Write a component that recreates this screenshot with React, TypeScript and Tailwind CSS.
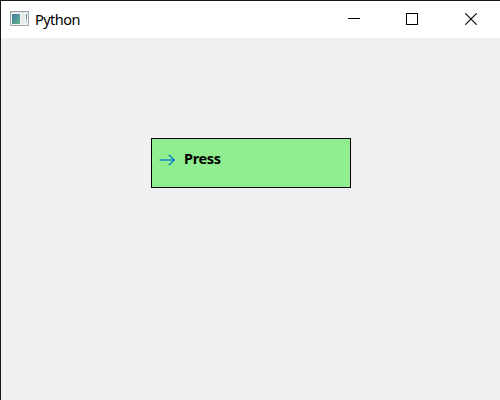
function AppIcon() {
  return (
    <svg width="19" height="15" viewBox="0 0 19 15" className="shrink-0">
      <defs>
        <linearGradient id="pane" x1="0" y1="0" x2="1" y2="1">
          <stop offset="0" stopColor="#4a7ba6" />
          <stop offset="1" stopColor="#5db585" />
        </linearGradient>
      </defs>
      <rect x="0.5" y="0.5" width="18" height="14" fill="#f4f5f6" stroke="#9da3a8" />
      <rect x="1" y="1" width="17" height="1" fill="#dfe3e6" />
      <rect x="2" y="3" width="8" height="10" fill="url(#pane)" />
      <rect x="11" y="3" width="4" height="10" fill="#e6e9ea" />
      <rect x="16" y="3" width="1" height="5" fill="#5b93a5" />
      <rect x="16" y="8" width="1" height="4" fill="#b5d8c5" />
    </svg>
  );
}

function TitleBar() {
  return (
    <header className="flex h-[37px] items-start bg-white">
      <div className="flex grow pl-[9px] pt-[10px]">
        <AppIcon />
        <span className="-mt-[2px] ml-[6px] text-[14.5px] leading-[20px] tracking-[-0.55px] text-black">Python</span>
      </div>
      <div className="flex h-[37px] shrink-0">
        <button aria-label="Minimize" className="w-[58px] pl-[22px]">
          <svg width="12" height="12" className="mb-[1px]" shapeRendering="crispEdges">
            <path d="M0 5.5H12" stroke="#000" />
          </svg>
        </button>
        <button aria-label="Maximize" className="w-[58px] pl-[22px]">
          <svg width="12" height="12" className="mb-[1px]" shapeRendering="crispEdges">
            <rect x="0.5" y="0.5" width="11" height="11" fill="none" stroke="#000" />
          </svg>
        </button>
        <button aria-label="Close" className="w-[58px] pl-[23px]">
          <svg width="12" height="12" className="mb-[1px]">
            <path d="M0.3 0.3L11.7 11.7M11.7 0.3L0.3 11.7" stroke="#000" strokeWidth="1.1" />
          </svg>
        </button>
      </div>
    </header>
  );
}

export default function App() {
  return (
    <div className="flex h-[400px] w-[500px] flex-col overflow-hidden border-l border-t border-[#171717] bg-[#f0f0f0] font-['Noto_Sans',sans-serif]">
      <TitleBar />
      <main className="grow pl-[150px] pt-[100px]">
        <button className="flex h-[50px] w-[200px] items-start border border-black bg-[#90ee90] pl-[7px] pt-[9px]">
          <svg width="17" height="12" viewBox="0 0 17 12" fill="none" stroke="#1683c6" strokeWidth="1.5" className="mt-[6px] shrink-0">
            <path d="M0.5 6H15.5M9.8 0.7L15.3 6L9.8 11.3" />
          </svg>
          <span className="ml-[8px] text-[14.5px] font-bold leading-[20px] tracking-[-0.35px] text-black">Press</span>
        </button>
      </main>
    </div>
  );
}
